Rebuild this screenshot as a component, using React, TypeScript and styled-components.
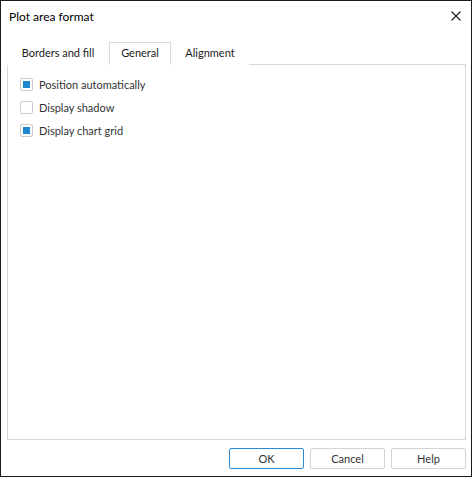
import React, { useState } from 'react';
import styled, { createGlobalStyle } from 'styled-components';

const FONT = "Lato, 'Liberation Sans', sans-serif";

const GlobalStyle = createGlobalStyle`
  html, body {
    margin: 0;
    padding: 0;
    background: #ffffff;
  }

  body {
    font-family: ${FONT};
    font-size: 11px;
  }
`;

const tabs = [
  { label: 'Borders and fill', width: 102 },
  { label: 'General', width: 62 },
  { label: 'Alignment', width: 78 },
];

const options = [
  { label: 'Position automatically', checked: true },
  { label: 'Display shadow', checked: false },
  { label: 'Display chart grid', checked: true },
];

const App = () => {
  const [activeTab, setActiveTab] = useState(1);
  const [checks, setChecks] = useState(options.map((o) => o.checked));

  const toggle = (index: number) => {
    setChecks((prev) => prev.map((v, i) => (i === index ? !v : v)));
  };

  return (
    <>
      <GlobalStyle />
      <StDialog>
        <StTitleBar>
          <StTitle>Plot area format</StTitle>
          <StCloseButton type="button" aria-label="Close">
            <svg width="10" height="10" viewBox="0 0 10 10">
              <path d="M0.5 0.5 L9.5 9.5 M9.5 0.5 L0.5 9.5" stroke="#1a1a1a" strokeWidth="1.1" />
            </svg>
          </StCloseButton>
        </StTitleBar>
        <StBody>
          <StTabList>
            {tabs.map((tab, index) => (
              <StTab
                key={tab.label}
                type="button"
                $width={tab.width}
                $active={index === activeTab}
                onClick={() => setActiveTab(index)}
              >
                {tab.label}
              </StTab>
            ))}
          </StTabList>
          <StPanel>
            {options.map((option, index) => (
              <StOptionRow key={option.label} onClick={() => toggle(index)}>
                <StCheckBox $checked={checks[index]} />
                <StOptionLabel>{option.label}</StOptionLabel>
              </StOptionRow>
            ))}
          </StPanel>
        </StBody>
        <StFooter>
          <StButton type="button" $primary>
            OK
          </StButton>
          <StButton type="button">Cancel</StButton>
          <StButton type="button">Help</StButton>
        </StFooter>
      </StDialog>
    </>
  );
};

export default App;

const StDialog = styled.div`
  display: flex;
  flex-direction: column;

  width: 472px;
  height: 477px;
  box-sizing: border-box;

  border: 1px solid #1a1a1a;
  background-color: #ffffff;
`;

const StTitleBar = styled.div`
  display: flex;
  justify-content: space-between;
  align-items: center;

  height: 30px;
  padding: 0 10px 0 8px;
`;

const StTitle = styled.span`
  color: #000000;
  font-size: 12px;
`;

const StCloseButton = styled.button`
  display: flex;
  justify-content: center;
  align-items: center;

  width: 10px;
  height: 10px;
  padding: 0;

  border: none;
  background: transparent;
`;

const StBody = styled.div`
  display: flex;
  flex: 1;
  flex-direction: column;

  padding: 11px 5px 0 6px;
`;

const StTabList = styled.div`
  display: flex;
  align-items: flex-end;

  height: 23px;
  margin-bottom: -1px;
`;

const StTab = styled.button<{ $width: number; $active: boolean }>`
  position: relative;
  z-index: ${({ $active }) => ($active ? 1 : 0)};

  width: ${({ $width }) => $width}px;
  height: 23px;
  box-sizing: border-box;
  padding: 0 0 3px;

  border: 1px solid ${({ $active }) => ($active ? '#d9d9d9' : 'transparent')};
  border-bottom-color: ${({ $active }) => ($active ? '#ffffff' : 'transparent')};
  background-color: #ffffff;

  color: #1a1a1a;
  font-family: ${FONT};
  font-size: 11px;
  cursor: default;
`;

const StPanel = styled.div`
  display: flex;
  flex: 1;
  flex-direction: column;
  gap: 6px;

  padding: 11px 12px;

  border: 1px solid #d9d9d9;
`;

const StOptionRow = styled.label`
  display: flex;
  align-items: center;
  gap: 6px;

  height: 17px;
  cursor: default;
`;

const StCheckBox = styled.span<{ $checked: boolean }>`
  position: relative;

  width: 13px;
  height: 13px;
  box-sizing: border-box;

  border: 1px solid #cccccc;
  border-radius: 2px;
  background-color: #ffffff;

  &::after {
    content: '';
    display: ${({ $checked }) => ($checked ? 'block' : 'none')};
    position: absolute;
    top: 2px;
    left: 2px;

    width: 7px;
    height: 7px;

    background-color: #1e88d0;
  }
`;

const StOptionLabel = styled.span`
  color: #333333;
  font-size: 11px;
`;

const StFooter = styled.div`
  display: flex;
  justify-content: flex-end;
  gap: 6px;

  padding: 8px 5px 7px 6px;
`;

const StButton = styled.button<{ $primary?: boolean }>`
  width: 75px;
  height: 21px;
  padding: 0;

  border: 1px solid ${({ $primary }) => ($primary ? '#2b8ad6' : '#d4d4d4')};
  border-radius: 2px;
  background-color: #ffffff;

  color: #333333;
  font-family: ${FONT};
  font-size: 11px;
`;
